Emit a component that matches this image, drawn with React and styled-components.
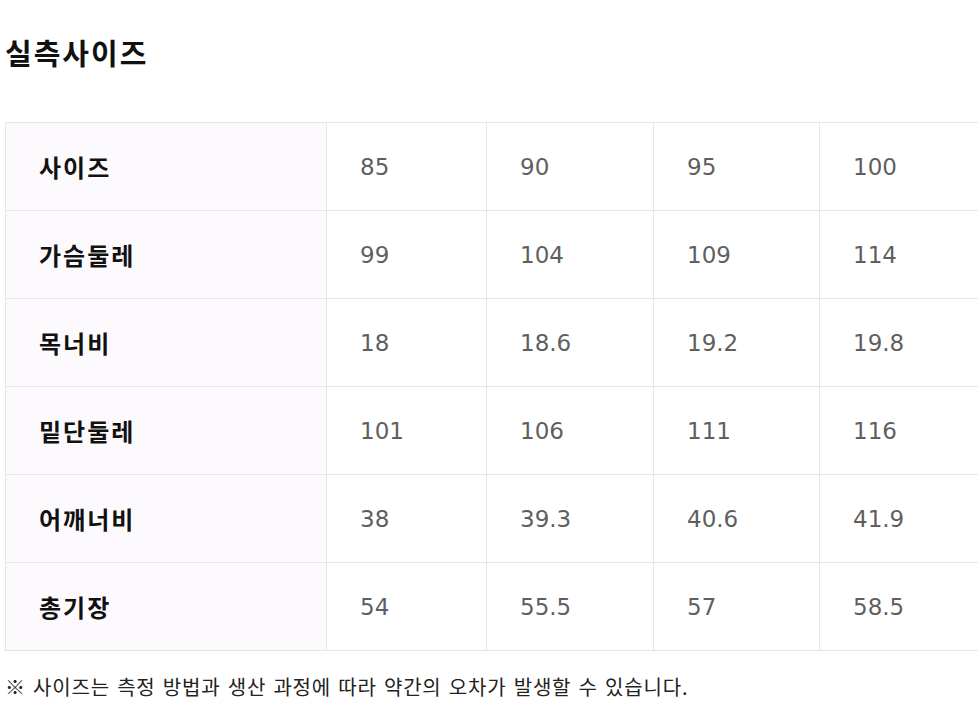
import styled, { createGlobalStyle } from "styled-components";

const GlobalStyle = createGlobalStyle`
  html, body {
    margin: 0;
    padding: 0;
    background: #ffffff;
    overflow-x: hidden;
  }
  body {
    font-family: "Noto Sans CJK KR", "DejaVu Sans", sans-serif;
  }
`;

const Page = styled.div`
  padding: 30px 0 0 5px;
  width: 1000px;
`;

const Title = styled.h2`
  margin: 0 0 48px;
  font-size: 29px;
  font-weight: 700;
  color: #111;
  line-height: 44px;
  letter-spacing: 2px;
`;

const SizeTable = styled.table`
  border-collapse: collapse;
  table-layout: fixed;
  width: 988px;
`;

const Row = styled.tr`
  height: 88px;
`;

const Label = styled.th`
  background: #fdfafd;
  border: 1px solid #e6e6e6;
  padding: 0 0 0 33px;
  text-align: left;
  font-size: 24px;
  font-weight: 700;
  letter-spacing: 2px;
  color: #111;
`;

const Cell = styled.td`
  border: 1px solid #e6e6e6;
  padding: 0 0 0 33px;
  font-family: "DejaVu Sans", sans-serif;
  font-size: 23px;
  color: #5f5f5f;
`;

const Note = styled.p`
  margin: 22px 0 0;
  font-size: 20px;
  letter-spacing: 0.8px;
  word-spacing: 2px;
  color: #222;
  line-height: 28px;
`;

const rows = [
  ["사이즈", "85", "90", "95", "100"],
  ["가슴둘레", "99", "104", "109", "114"],
  ["목너비", "18", "18.6", "19.2", "19.8"],
  ["밑단둘레", "101", "106", "111", "116"],
  ["어깨너비", "38", "39.3", "40.6", "41.9"],
  ["총기장", "54", "55.5", "57", "58.5"],
];

const widths = [321, 160, 167, 166, 174];

const App = () => {
  return (
    <Page>
      <GlobalStyle />
      <Title>실측사이즈</Title>
      <SizeTable>
        <colgroup>
          {widths.map((w, i) => (
            <col key={i} style={{ width: w }} />
          ))}
        </colgroup>
        <tbody>
          {rows.map(([label, ...values]) => (
            <Row key={label}>
              <Label>{label}</Label>
              {values.map((v, i) => (
                <Cell key={i}>{v}</Cell>
              ))}
            </Row>
          ))}
        </tbody>
      </SizeTable>
      <Note>※ 사이즈는 측정 방법과 생산 과정에 따라 약간의 오차가 발생할 수 있습니다.</Note>
    </Page>
  );
};

export default App;
